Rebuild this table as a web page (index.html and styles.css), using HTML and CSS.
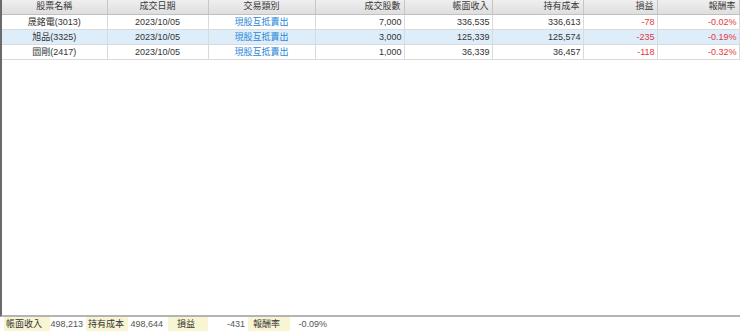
FILE: index.html
```html
<!DOCTYPE html>
<html lang="zh-Hant">
<head>
<meta charset="utf-8">
<link rel="stylesheet" href="styles.css">
</head>
<body>
<div class="panel">
  <div class="grid-area">
    <table class="grid">
      <colgroup>
        <col class="c1"><col class="c2"><col class="c3"><col class="c4">
        <col class="c5"><col class="c6"><col class="c7"><col class="c8">
      </colgroup>
      <thead>
        <tr>
          <th class="ctr">股票名稱</th>
          <th class="ctr">成交日期</th>
          <th class="ctr">交易類別</th>
          <th class="num">成交股數</th>
          <th class="num">帳面收入</th>
          <th class="num">持有成本</th>
          <th class="num">損益</th>
          <th class="num">報酬率</th>
        </tr>
      </thead>
      <tbody>
        <tr>
          <td class="ctr">晟銘電(3013)</td>
          <td class="ctr">2023/10/05</td>
          <td class="ctr link">現股互抵賣出</td>
          <td class="num">7,000</td>
          <td class="num">336,535</td>
          <td class="num">336,613</td>
          <td class="num neg">-78</td>
          <td class="num neg">-0.02%</td>
        </tr>
        <tr class="sel">
          <td class="ctr">旭品(3325)</td>
          <td class="ctr">2023/10/05</td>
          <td class="ctr link">現股互抵賣出</td>
          <td class="num">3,000</td>
          <td class="num">125,339</td>
          <td class="num">125,574</td>
          <td class="num neg">-235</td>
          <td class="num neg">-0.19%</td>
        </tr>
        <tr>
          <td class="ctr">圜剛(2417)</td>
          <td class="ctr">2023/10/05</td>
          <td class="ctr link">現股互抵賣出</td>
          <td class="num">1,000</td>
          <td class="num">36,339</td>
          <td class="num">36,457</td>
          <td class="num neg">-118</td>
          <td class="num neg">-0.32%</td>
        </tr>
      </tbody>
    </table>
  </div>
  <div class="summary">
    <span class="lbl w1">帳面收入</span>
    <span class="val v1">498,213</span>
    <span class="lbl w2">持有成本</span>
    <span class="val v2">498,644</span>
    <span class="lbl w3 mid">損益</span>
    <span class="val v3">-431</span>
    <span class="lbl w4">報酬率</span>
    <span class="val v4">-0.09%</span>
  </div>
</div>
</body>
</html>
```
FILE: styles.css
```css
* { box-sizing: border-box; }
html, body {
  margin: 0;
  padding: 0;
  background: #fff;
}
body {
  width: 740px;
  height: 331px;
  overflow: hidden;
  font-family: "Liberation Sans", "Noto Sans CJK TC", sans-serif;
  font-size: 9px;
  color: #333;
}
.panel {
  display: flex;
  flex-direction: column;
  height: 331px;
}
.grid-area {
  flex: 1;
  border-left: 2px solid #6a6a6a;
  border-bottom: 2px solid #b4b4b4;
}
.grid {
  border-collapse: collapse;
  table-layout: fixed;
  width: 737px;
}
.c1 { width: 105px; }
.c2 { width: 101px; }
.c3 { width: 107px; }
.c4 { width: 89px; }
.c5 { width: 88px; }
.c6 { width: 91px; }
.c7 { width: 74px; }
.c8 { width: 82px; }
th {
  height: 14px;
  padding: 0 3px;
  font-weight: normal;
  color: #3a3a3a;
  background: linear-gradient(#efefef, #dedede);
  border-right: 1px solid #c6c6c6;
  border-bottom: 1px solid #c0c0c0;
  line-height: 13px;
  white-space: nowrap;
}
td {
  height: 15px;
  padding: 0 2px;
  border-right: 1px solid #dadada;
  border-bottom: 1px solid #dadada;
  line-height: 14px;
  white-space: nowrap;
  color: #333;
}
.ctr { text-align: center; }
.num { text-align: right; }
.link { color: #2a86d8; }
.neg { color: #e8343c; }
tr.sel td { background: #ddeefa; }
.summary {
  height: 14px;
  display: flex;
  align-items: stretch;
  padding-left: 4px;
  line-height: 14px;
}
.lbl {
  background: #f8f5d2;
  color: #333;
  padding-left: 2px;
}
.val {
  text-align: right;
  color: #555;
  padding-right: 3px;
}
.w1 { width: 46px; }
.v1 { width: 36px; }
.w2 { width: 42px; }
.v2 { width: 38px; margin-right: 2px; }
.w3 { width: 40px; }
.v3 { width: 40px; }
.w4 { width: 42px; padding-left: 5px; }
.v4 { width: 40px; }
.mid { padding-left: 9px; }
```
